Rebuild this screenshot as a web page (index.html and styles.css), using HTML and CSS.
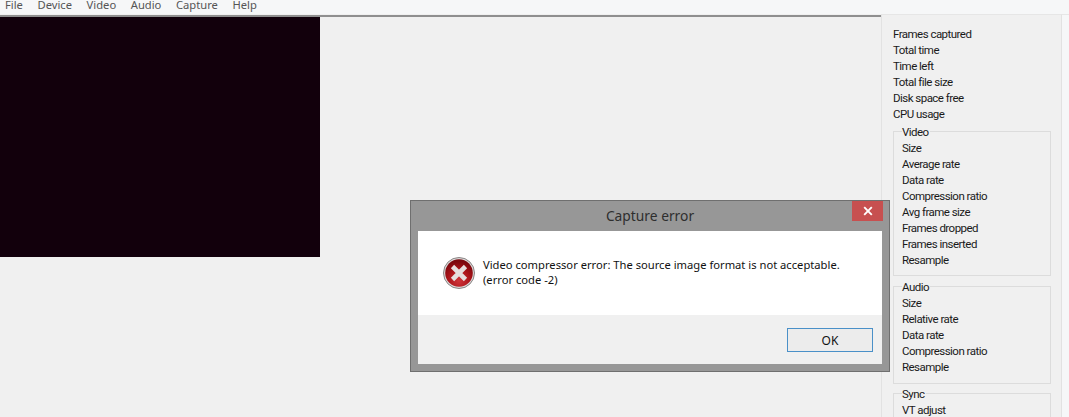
FILE: index.html
```html
<!DOCTYPE html>
<html lang="en">
<head>
    <meta charset="UTF-8">
    <title>Capture error</title>
    <link rel="stylesheet" href="styles.css">
</head>
<body>
    <div class="menu-bar">
        <span>File</span>
        <span>Device</span>
        <span>Video</span>
        <span>Audio</span>
        <span>Capture</span>
        <span>Help</span>
    </div>
    <div class="workspace">
        <div class="preview-pane">
            <div class="preview"></div>
        </div>
        <div class="side-panel">
            <div class="stat-list">
                <div>Frames captured</div>
                <div>Total time</div>
                <div>Time left</div>
                <div>Total file size</div>
                <div>Disk space free</div>
                <div>CPU usage</div>
            </div>
            <div class="group group-video">
                <div class="group-title">Video</div>
                <div>Size</div>
                <div>Average rate</div>
                <div>Data rate</div>
                <div>Compression ratio</div>
                <div>Avg frame size</div>
                <div>Frames dropped</div>
                <div>Frames inserted</div>
                <div>Resample</div>
            </div>
            <div class="group group-audio">
                <div class="group-title">Audio</div>
                <div>Size</div>
                <div>Relative rate</div>
                <div>Data rate</div>
                <div>Compression ratio</div>
                <div>Resample</div>
            </div>
            <div class="group group-sync">
                <div class="group-title">Sync</div>
                <div>VT adjust</div>
            </div>
        </div>
        <div class="right-strip"></div>
    </div>

    <div class="dialog">
        <div class="dialog-title">
            <span>Capture error</span>
            <div class="close-btn">
                <svg width="10" height="10" viewBox="0 0 10 10">
                    <path d="M1.2 1.2 L8.8 8.8 M8.8 1.2 L1.2 8.8" stroke="#fff" stroke-width="1.9" fill="none"/>
                </svg>
            </div>
        </div>
        <div class="dialog-inner">
            <div class="dialog-body">
                <svg class="error-icon" width="32" height="32" viewBox="0 0 32 32">
                    <defs>
                        <radialGradient id="redFill" cx="50%" cy="78%" r="70%">
                            <stop offset="0%" stop-color="#cf343a"/>
                            <stop offset="60%" stop-color="#a81218"/>
                            <stop offset="100%" stop-color="#7c080e"/>
                        </radialGradient>
                    </defs>
                    <circle cx="16" cy="16" r="15.5" fill="#dcd9d9" stroke="#8a8585" stroke-width="1"/>
                    <circle cx="16" cy="16" r="13.8" fill="url(#redFill)"/>
                    <path d="M9.5 9.5 L22.5 22.5 M22.5 9.5 L9.5 22.5" stroke="#e6dede" stroke-width="4.6" fill="none"/>
                </svg>
                <div class="message">
                    <div>Video compressor error: The source image format is not acceptable.</div>
                    <div>(error code -2)</div>
                </div>
            </div>
            <div class="dialog-footer">
                <button type="button" class="ok-btn">OK</button>
            </div>
        </div>
    </div>
</body>
</html>
```

FILE: styles.css
```css
html, body {
    margin: 0;
    height: 100%;
    overflow: hidden;
}

body {
    position: relative;
    display: flex;
    flex-direction: column;
    background-color: #f0f0f0;
    color: #1a1a1a;
    font-family: "Noto Sans", "Open Sans", sans-serif;
    font-size: 12px;
    line-height: 16px;
}

.menu-bar {
    display: flex;
    gap: 14.6px;
    height: 14px;
    padding-left: 5px;
    background-color: #f6f7f8;
    color: #555;
    font-size: 11.2px;
    line-height: 10px;
    flex: none;
}

.workspace {
    display: flex;
    flex: 1;
    min-height: 0;
}

.preview-pane {
    width: 881px;
    flex: none;
    border-top: 2px solid #8f8f8f;
    margin-top: 1px;
}

.preview {
    width: 320px;
    height: 240px;
    background-color: #12000c;
}

.side-panel {
    width: 180px;
    height: 403px;
    overflow: hidden;
    flex: none;
    padding: 11px 0 0 11px;
    box-sizing: border-box;
    border-left: 1px solid #e2e2e2;
    border-top: 1px solid #e6e6e6;
    font-family: "Roboto", sans-serif;
    font-size: 11.5px;
    letter-spacing: -0.53px;
}

.right-strip {
    flex: 1;
    border-left: 1px solid #e2e2e2;
    background-color: #f6f7f8;
    border-top: 1px solid #e6e6e6;
}

.group {
    width: 158px;
    box-sizing: border-box;
    border: 1px solid #dcdcdc;
    padding: 8px 0 0 8px;
    margin-top: 10px;
}

.stat-list + .group {
    margin-top: 9px;
}

.group-title {
    width: max-content;
    height: 16px;
    margin-top: -16px;
    padding-right: 1px;
    background-color: #f0f0f0;
}

.group-video {
    height: 145px;
}

.group-audio {
    height: 98px;
}

.group-sync {
    height: 60px;
    margin-top: 9px;
}

.dialog {
    position: absolute;
    left: 410px;
    top: 200px;
    width: 480px;
    height: 172px;
    box-sizing: border-box;
    border: 1px solid #6f6f6f;
    background-color: #979797;
    padding: 0 7px 7px 7px;
    display: flex;
    flex-direction: column;
}

.dialog-title {
    position: relative;
    height: 30px;
    flex: none;
    text-align: center;
    color: #2e2e2e;
    font-size: 13.8px;
    line-height: 30px;
}

.close-btn {
    position: absolute;
    right: -1px;
    top: 0;
    width: 31px;
    height: 20px;
    background-color: #c75050;
    display: flex;
    align-items: center;
    justify-content: center;
}

.dialog-inner {
    flex: 1;
    display: flex;
    flex-direction: column;
}

.dialog-body {
    height: 84px;
    flex: none;
    box-sizing: border-box;
    background-color: #fff;
    display: flex;
    gap: 8px;
    padding: 26px 0 0 25px;
    color: #111;
    font-size: 11.2px;
}

.error-icon {
    flex: none;
}

.message {
    white-space: nowrap;
    line-height: 15px;
}

.dialog-footer {
    flex: 1;
    background-color: #f0f0f0;
    display: flex;
    justify-content: flex-end;
    padding: 13px 9px 0 0;
}

.ok-btn {
    width: 86px;
    height: 24px;
    box-sizing: border-box;
    border: 1px solid #4a90c8;
    background-color: #ececec;
    color: #111;
    font-family: inherit;
    font-size: 12px;
    padding: 0;
}
```
